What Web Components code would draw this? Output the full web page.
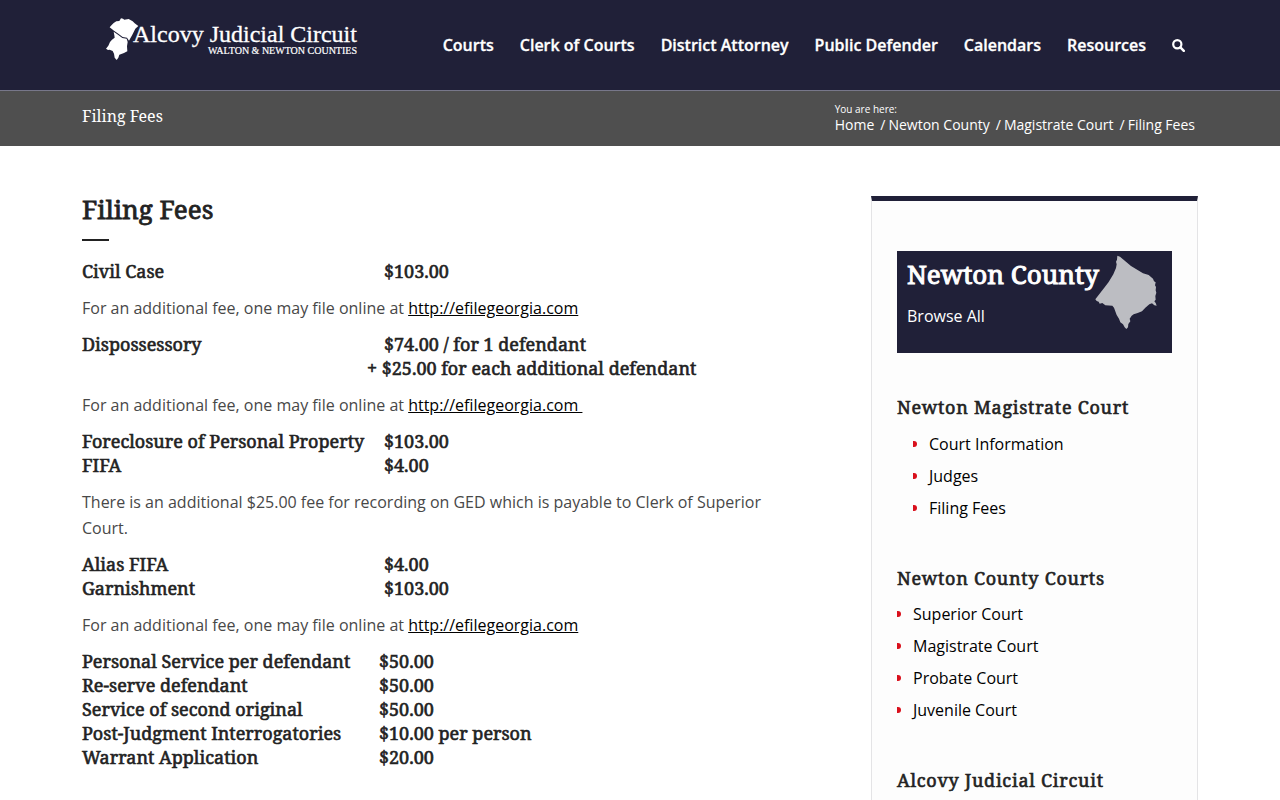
<!DOCTYPE html>
<html lang="en">
<head>
<meta charset="utf-8">
<title>Filing Fees</title>
<style>
  :root {
    --navy: #202038;
    --slate: #4f4f4f;
    --ink: #222222;
    --sans: "Open Sans", "Noto Sans", sans-serif;
    --serif: "Droid Serif", "Noto Serif", "DejaVu Serif Condensed", "DejaVu Serif", serif;
    --gutter: 82px;
  }
  body { margin: 0; background: #fff; color: var(--ink); font: 16px/26px var(--sans); }
</style>
</head>
<body>
<site-page></site-page>

<script>
const define = (name, html) => {
  const template = document.createElement('template');
  template.innerHTML = html;
  customElements.define(name, class extends HTMLElement {
    constructor() {
      super();
      this.attachShadow({ mode: 'open' }).append(template.content.cloneNode(true));
    }
  });
};

define('site-logo', `
  <style>
    :host { display: block; }
    a { display: flex; color: #fff; text-decoration: none; }
    svg { display: block; width: 35px; height: 44px; flex: none; margin-right: -7px; }
    .words { display: flex; flex-direction: column; align-items: flex-end; padding-top: 5px; font-family: "Liberation Serif", serif; white-space: nowrap; }
    .name { font-size: 24px; line-height: 24px; -webkit-text-stroke: 0.3px currentColor; }
    .sub { font-size: 10px; line-height: 10px; -webkit-text-stroke: 0.2px currentColor; }
  </style>
  <a href="#">
    <svg viewBox="15 15 105 132" fill="#fff" aria-hidden="true">
      <path d="M29 46L35 39 41 33 49 28 58 27 63 19 69 20 73 23 86 21 98 28 104 34 115 42 106 50 97 68 87 86 81 77 68 75 55 65 42 56Z"/>
      <path d="M41 59L54 68 67 78 80 80 83 90 81 103 82 118 72 123 58 128 55 137 50 144 44 137 42 125 38 117 29 113 24 114 18 110 25 101 30 90 36 83 44 77 43 70Z"/>
    </svg>
    <span class="words">
      <span class="name">Alcovy Judicial Circuit</span>
      <span class="sub">WALTON &amp; NEWTON COUNTIES</span>
    </span>
  </a>`);

define('site-nav', `
  <style>
    :host { display: block; }
    nav { display: flex; align-items: center; gap: 26px; }
    a { color: #fff; font-weight: 600; text-decoration: none; white-space: nowrap; -webkit-text-stroke: 0.3px currentColor; }
    button { display: block; padding: 0; border: 0; background: none; }
    svg { display: block; width: 13px; height: 13px; }
  </style>
  <nav aria-label="Main">
    <a href="#">Courts</a><a href="#">Clerk of Courts</a><a href="#">District Attorney</a>
    <a href="#">Public Defender</a><a href="#">Calendars</a><a href="#">Resources</a>
    <button aria-label="Search"><svg viewBox="0 0 13 13" fill="none" stroke="#fff"><circle cx="5.3" cy="5.3" r="4.1" stroke-width="2.2"/><path d="M8.4 8.4l3.4 3.4" stroke-width="2.5" stroke-linecap="round"/></svg></button>
  </nav>`);

define('site-header', `
  <style>
    :host { display: flex; align-items: center; justify-content: space-between; height: 90px;
      padding: 0 95px 0 105px; background: var(--navy); border-bottom: 1px solid #77778a; }
    site-logo { align-self: flex-start; padding-top: 17px; }
  </style>
  <site-logo></site-logo><site-nav></site-nav>`);

define('title-bar', `
  <style>
    :host { display: flex; justify-content: space-between; height: 55px; padding: 0 85px 0 var(--gutter); background: var(--slate); color: #fff; }
    .title { padding-top: 12px; font-family: var(--serif); }
    nav { padding-top: 12px; font-size: 14px; line-height: 18px; }
    small { display: block; margin-bottom: 1px; font-size: 10px; line-height: 12px; }
    ol { display: flex; margin: 0; padding: 0; list-style: none; }
    li + li::before { content: "/"; padding: 0 3px 0 6px; }
    a { color: inherit; text-decoration: none; }
  </style>
  <span class="title">Filing Fees</span>
  <nav aria-label="Breadcrumb">
    <small>You are here:</small>
    <ol><li><a href="#">Home</a></li><li><a href="#">Newton County</a></li><li><a href="#">Magistrate Court</a></li><li>Filing Fees</li></ol>
  </nav>`);

define('fee-note', `
  <style>
    :host { display: block; margin: 12px 0 11px; color: #484848; }
    ::slotted(a) { color: #000; text-decoration: underline; }
  </style>
  <slot></slot>`);

customElements.define('fee-table', class extends HTMLElement {
  connectedCallback() {
    const rows = this.getAttribute('rows').split(';').map(r => r.split('|').map(c => c.trim()));
    const root = this.attachShadow({ mode: 'open' });
    root.innerHTML = `
      <style>
        :host { display: block; font: 18px/24px var(--serif); -webkit-text-stroke: 0.6px currentColor; }
        table { border-collapse: collapse; }
        th, td { padding: 0; font-weight: 400; text-align: left; white-space: nowrap; }
        th { width: var(--label-width, 302px); }
        .extra { text-indent: -17px; }
      </style>
      <table>${rows.map(([label, fee]) =>
        `<tr><th scope="row">${label}</th><td${fee.startsWith('+') ? ' class="extra"' : ''}>${fee}</td></tr>`).join('')}</table>`;
  }
});

define('fee-article', `
  <style>
    :host { display: block; }
    h1 { margin: 0 0 18px; font: 26px/26px var(--serif); -webkit-text-stroke: 0.8px currentColor; }
    h1::after { content: ""; display: block; width: 27px; height: 2px; margin-top: 17px; background: var(--ink); }
    .services { --label-width: 297px; }
  </style>
  <h1>Filing Fees</h1>
  <fee-table rows="Civil Case|$103.00"></fee-table>
  <fee-note>For an additional fee, one may file online at <a href="#">http://efilegeorgia.com</a></fee-note>
  <fee-table rows="Dispossessory|$74.00 / for 1 defendant;|+ $25.00 for each additional defendant"></fee-table>
  <fee-note>For an additional fee, one may file online at <a href="#">http://efilegeorgia.com&nbsp;</a></fee-note>
  <fee-table rows="Foreclosure of Personal Property|$103.00;FIFA|$4.00"></fee-table>
  <fee-note>There is an additional $25.00 fee for recording on GED which is payable to Clerk of Superior Court.</fee-note>
  <fee-table rows="Alias FIFA|$4.00;Garnishment|$103.00"></fee-table>
  <fee-note>For an additional fee, one may file online at <a href="#">http://efilegeorgia.com</a></fee-note>
  <fee-table class="services" rows="Personal Service per defendant|$50.00;Re-serve defendant|$50.00;Service of second original|$50.00;Post-Judgment Interrogatories|$10.00 per person;Warrant Application|$20.00"></fee-table>`);

define('county-card', `
  <style>
    :host { display: flex; justify-content: space-between; height: 102px; box-sizing: border-box; padding: 4px 14px 0 10px; background: var(--navy); color: #fff; }
    h2 { margin: 5px 0 14px; font: 26px/28px var(--serif); -webkit-text-stroke: 1px currentColor; white-space: nowrap; }
    .words { width: 0; }
    a { color: inherit; text-decoration: none; white-space: nowrap; display: block; line-height: 28px; }
    svg { display: block; width: 63px; height: 74px; }
  </style>
  <div class="words"><h2>Newton County</h2><a href="#">Browse All</a></div>
  <svg viewBox="675 210 189 222" fill="#bcbdc2" aria-hidden="true"><path d="M742 212L750 215 783 243 819 265 836 270 849 281 852 289 857 292 855 301 858 306 857 316 859 323 856 333 857 344 853 349 857 354 860 362 853 361 846 355 838 358 826 368 816 379 803 384 791 388 785 392 779 401 781 409 775 417 774 427 769 432 764 427 759 418 751 412 747 401 740 390 732 368 727 362 706 361 697 354 689 356 686 350 680 348 676 343 683 334 704 307 716 291 730 268 738 249 740 238 738 230 741 224Z"/></svg>`);

define('link-group', `
  <style>
    :host { display: block; }
    h3 { margin: 0; font: 18px/24px var(--serif); letter-spacing: 0.04em; -webkit-text-stroke: 0.6px currentColor; }
    ul { margin: 0; padding: 8px 0 0; list-style: none; }
    :host([indent]) ul { padding: 9px 0 0 16px; }
  </style>
  <h3><slot name="title"></slot></h3>
  <ul><slot></slot></ul>`);

define('link-item', `
  <style>
    :host { display: flex; align-items: center; gap: 12px; line-height: 32px; }
    :host::before { content: ""; width: 4px; height: 6px; border-radius: 0 3px 3px 0; background: #d9101c; }
    a { color: #000; text-decoration: none; }
  </style>
  <a href="#"><slot></slot></a>`);

define('side-bar', `
  <style>
    :host { display: block; box-sizing: border-box; padding: 50px 25px; background: #fdfdfd; border: 1px solid #e4e4e6; border-top: 5px solid var(--navy); }
    link-group { margin-top: 42px; }
  </style>
  <county-card></county-card>
  <link-group indent><span slot="title">Newton Magistrate Court</span>
    <link-item role="listitem">Court Information</link-item><link-item role="listitem">Judges</link-item><link-item role="listitem">Filing Fees</link-item>
  </link-group>
  <link-group><span slot="title">Newton County Courts</span>
    <link-item role="listitem">Superior Court</link-item><link-item role="listitem">Magistrate Court</link-item><link-item role="listitem">Probate Court</link-item><link-item role="listitem">Juvenile Court</link-item>
  </link-group>
  <link-group><span slot="title">Alcovy Judicial Circuit</span></link-group>`);

define('site-page', `
  <style>
    :host { display: block; }
    main { display: flex; align-items: flex-start; gap: 80px; padding: 50px var(--gutter) 0; }
    fee-article { flex: 1; min-width: 0; }
    side-bar { flex: 0 0 327px; }
  </style>
  <site-header></site-header>
  <title-bar></title-bar>
  <main><fee-article></fee-article><side-bar></side-bar></main>`);
</script>
</body>
</html>
